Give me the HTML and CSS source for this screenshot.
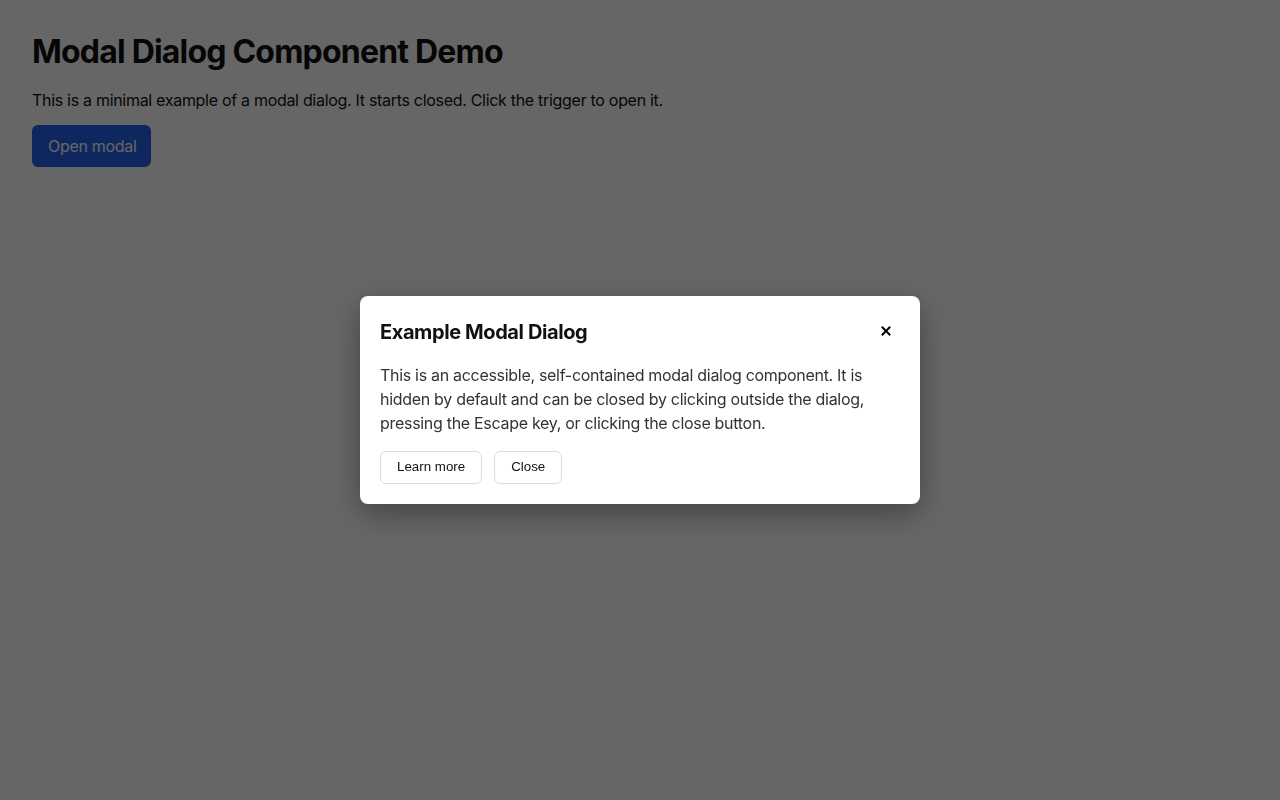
FILE: index.html
```html
<!DOCTYPE html>
<html lang="en">
<head>
<meta charset="utf-8">
<title>Modal Dialog Component Demo</title>
<link rel="stylesheet" href="styles.css">
</head>
<body>
<main class="page">
  <h1 class="page-title">Modal Dialog Component Demo</h1>
  <p class="page-text">This is a minimal example of a modal dialog. It starts closed. Click the trigger to open it.</p>
  <button class="open-btn" type="button">Open modal</button>
</main>
<div class="overlay">
  <div class="modal" role="dialog" aria-modal="true" aria-labelledby="modal-title">
    <div class="modal-header">
      <h2 class="modal-title" id="modal-title">Example Modal Dialog</h2>
      <button class="modal-close" type="button" aria-label="Close">
        <svg class="close-icon" viewBox="0 0 10 10" width="10" height="10" aria-hidden="true">
          <path d="M1.5 1.5 L8.5 8.5 M8.5 1.5 L1.5 8.5" stroke="#000" stroke-width="2" stroke-linecap="square" fill="none"/>
        </svg>
      </button>
    </div>
    <p class="modal-text">This is an accessible, self-contained modal dialog component. It is hidden by default and can be closed by clicking outside the dialog, pressing the Escape key, or clicking the close button.</p>
    <div class="modal-actions">
      <button class="action-btn" type="button">Learn more</button>
      <button class="action-btn" type="button">Close</button>
    </div>
  </div>
</div>
</body>
</html>
```
FILE: styles.css
```css
* { box-sizing: border-box; }
html, body { margin: 0; height: 100%; }
body {
  font-family: Inter, "Noto Sans", sans-serif;
  background: #ffffff;
  color: #111;
}
.page {
  padding: 32px;
}
.page-title {
  margin: 0 0 16px;
  font-size: 32px;
  line-height: 40px;
  font-weight: 700;
  letter-spacing: -0.8px;
}
.page-text {
  margin: 0 0 13px;
  font-size: 16px;
  line-height: 24px;
  letter-spacing: -0.3px;
}
.open-btn {
  font-family: Inter, "Noto Sans", sans-serif;
  font-size: 16px;
  line-height: 22px;
  padding: 10px 14px 10px 16px;
  letter-spacing: -0.3px;
  background: #2563eb;
  color: #ffffff;
  border: none;
  border-radius: 6px;
}
.overlay {
  position: fixed;
  inset: 0;
  background: rgba(0, 0, 0, 0.6);
  display: flex;
  align-items: center;
  justify-content: center;
}
.modal {
  width: 560px;
  background: #ffffff;
  border-radius: 8px;
  padding: 20px;
  box-shadow: 0 10px 30px rgba(0, 0, 0, 0.35);
}
.modal-header {
  display: flex;
  align-items: center;
  justify-content: space-between;
  height: 32px;
  margin-bottom: 15px;
}
.modal-title {
  margin: 0;
  font-size: 20px;
  line-height: 28px;
  font-weight: 700;
  color: #111;
  letter-spacing: -0.4px;
}
.modal-close {
  display: flex;
  align-items: center;
  justify-content: center;
  width: 30px;
  height: 30px;
  margin-right: -1px;
  margin-top: -3px;
  padding: 0;
  border: none;
  background: transparent;
}
.close-icon {
  display: block;
}
.modal-text {
  margin: 0 0 16px;
  font-size: 16px;
  line-height: 24px;
  color: #333;
  letter-spacing: -0.3px;
}
.modal-actions {
  display: flex;
  gap: 12px;
}
.action-btn {
  font-family: "Liberation Sans", Arial, sans-serif;
  font-size: 13.33px;
  line-height: 16px;
  padding: 7px 16px 8px;
  background: #ffffff;
  color: #111;
  border: 1px solid #dddddd;
  border-radius: 6px;
}
```
